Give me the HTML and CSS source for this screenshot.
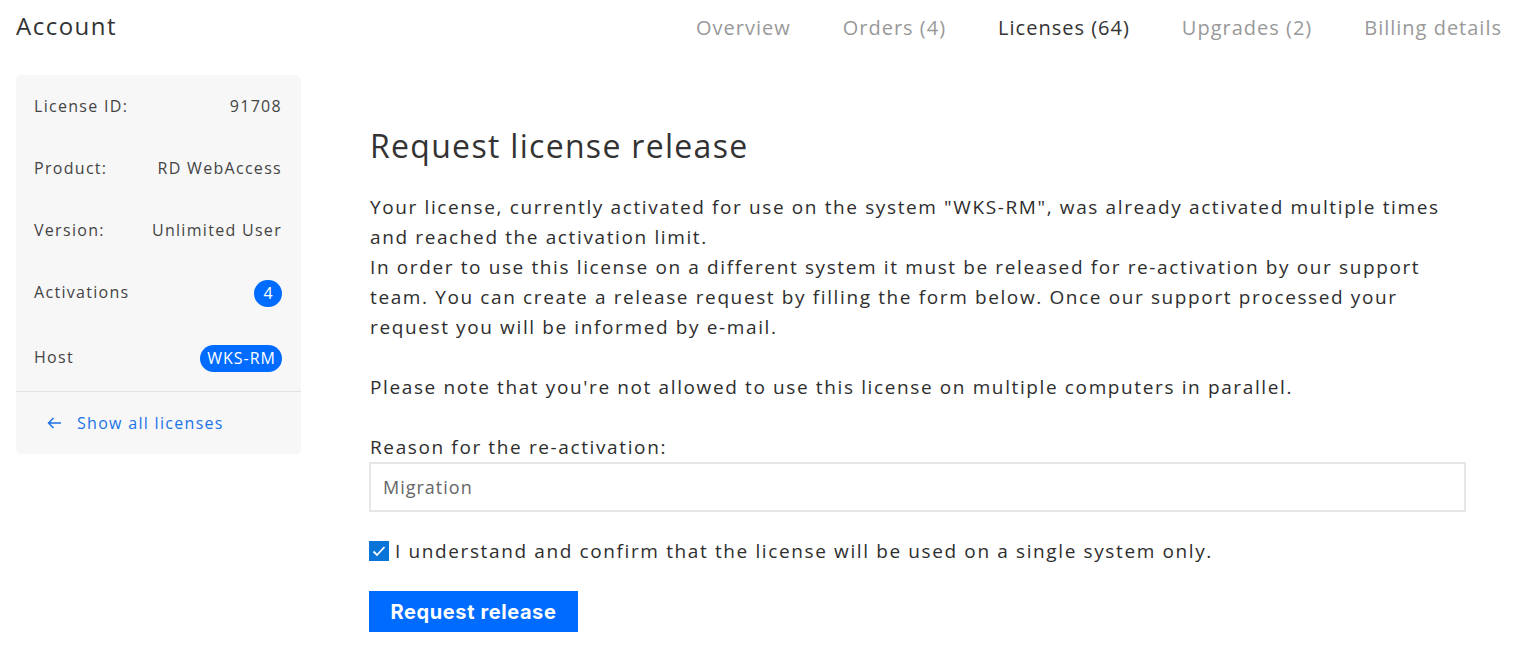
FILE: index.html
```html
<!DOCTYPE html>
<html lang="en">
<head>
<meta charset="utf-8">
<title>Account</title>
<link rel="stylesheet" href="styles.css">
</head>
<body>
<header class="topbar">
  <h1 class="brand">Account</h1>
  <nav class="nav">
    <a class="nav-item">Overview</a>
    <a class="nav-item">Orders (4)</a>
    <a class="nav-item active">Licenses (64)</a>
    <a class="nav-item">Upgrades (2)</a>
    <a class="nav-item">Billing details</a>
  </nav>
</header>
<div class="layout">
  <aside class="card">
    <div class="rows">
      <div class="row"><span>License ID:</span><span>91708</span></div>
      <div class="row"><span>Product:</span><span>RD WebAccess</span></div>
      <div class="row"><span>Version:</span><span>Unlimited User</span></div>
      <div class="row"><span>Activations</span><span class="badge round">4</span></div>
      <div class="row last"><span>Host</span><span class="badge pill">WKS-RM</span></div>
    </div>
    <a class="back">
      <svg class="arrow" width="16" height="16" viewBox="0 0 16 16"><path d="M15 8H2.5M7.5 3L2.5 8l5 5" fill="none" stroke="currentColor" stroke-width="1.5"/></svg>
      <span>Show all licenses</span>
    </a>
  </aside>
  <main class="main">
    <h2 class="title">Request license release</h2>
    <p class="text">Your license, currently activated for use on the system "WKS-RM", was already activated multiple times and reached the activation limit.<br>In order to use this license on a different system it must be released for re-activation by our support team. You can create a release request by filling the form below. Once our support processed your request you will be informed by e-mail.</p>
    <p class="text">Please note that you're not allowed to use this license on multiple computers in parallel.</p>
    <label class="label">Reason for the re-activation:</label>
    <div class="input">Migration</div>
    <div class="check">
      <span class="box"><svg width="20" height="20" viewBox="0 0 20 20"><path d="M4.5 10.5l3.5 3.5 7.5-8" fill="none" stroke="#fff" stroke-width="1.8"/></svg></span>
      <span>I understand and confirm that the license will be used on a single system only.</span>
    </div>
    <button class="btn">Request release</button>
  </main>
</div>
</body>
</html>
```
FILE: styles.css
```css
* { box-sizing: border-box; }
body {
  margin: 0;
  font-family: "Open Sans", "Noto Sans", sans-serif;
  color: #333;
  background: #fff;
}
.topbar {
  display: flex;
  justify-content: space-between;
  align-items: center;
  padding: 0 22px 0 16px;
  height: 55px;
}
.brand {
  margin: 0;
  font-size: 24px;
  font-weight: 400;
  letter-spacing: 1.5px;
  color: #333;
  position: relative;
  top: -2px;
}
.nav {
  display: flex;
  gap: 52px;
}
.nav-item {
  font-size: 20px;
  color: #999;
  letter-spacing: 1px;
}
.nav-item.active { color: #333; }
.layout {
  display: flex;
  padding: 20px 16px 0 16px;
  gap: 68px;
}
.card {
  width: 285px;
  flex: none;
  background: #f7f7f7;
  border-radius: 5px;
  align-self: flex-start;
}
.rows { padding: 0 19px 0 18px; border-bottom: 1px solid #e2e2e2; }
.row {
  display: flex;
  justify-content: space-between;
  align-items: center;
  height: 62px;
  font-size: 16px;
  letter-spacing: 1.3px;
  color: #444;
}
.row.last { height: 68px; }
.badge {
  background: #006cff;
  color: #fff;
  font-size: 16px;
  height: 27px;
  line-height: 27px;
  border-radius: 14px;
  letter-spacing: 1px;
  margin-top: 3px;
}
.round { width: 28px; text-align: center; letter-spacing: 0; }
.pill { padding: 0 6px 0 7px; }
.back {
  display: flex;
  align-items: center;
  gap: 15px;
  padding: 0 0 0 30px;
  height: 62px;
  color: #1a73e8;
  font-size: 16px;
  letter-spacing: 1.3px;
}
.arrow { color: #1a73e8; }
.main {
  width: 1097px;
  padding-top: 49px;
}
.title {
  margin: 0 0 24px 1px;
  font-size: 32px;
  font-weight: 400;
  letter-spacing: 1.3px;
  color: #333;
  line-height: 44px;
}
.text {
  margin: 0 0 30px 1px;
  font-size: 19px;
  line-height: 30px;
  letter-spacing: 1.62px;
  color: #2e2e2e;
}
.label {
  display: block;
  font-size: 19px;
  line-height: 30px;
  letter-spacing: 1.62px;
  margin: 2px 0 0 1px;
  color: #2e2e2e;
}
.input {
  height: 50px;
  border: 2px solid #e6e6e6;
  padding: 0 12px;
  line-height: 46px;
  font-size: 18px;
  letter-spacing: 1px;
  color: #666;
}
.check {
  display: flex;
  align-items: center;
  gap: 6px;
  margin-top: 26px;
  font-size: 19px;
  letter-spacing: 1.62px;
  color: #2e2e2e;
}
.box {
  width: 20px;
  height: 20px;
  background: #0a74d8;
  display: flex;
}
.btn {
  margin-top: 27px;
  width: 209px;
  height: 41px;
  border: none;
  background: #006cff;
  color: #fff;
  font-family: "Inter", sans-serif;
  font-weight: 700;
  font-size: 20px;
  letter-spacing: 0.6px;
  padding: 0;
}
```
